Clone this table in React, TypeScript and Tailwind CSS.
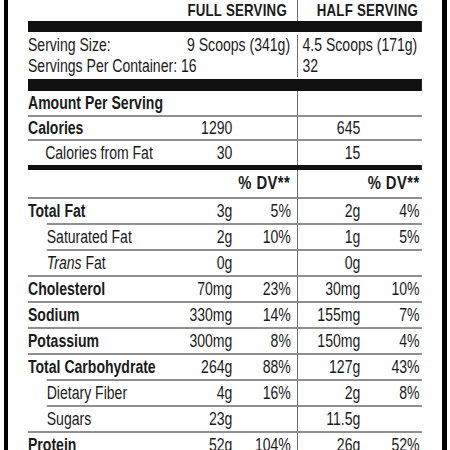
import React from "react"

type Row = {
    label: React.ReactNode
    bold?: boolean
    sub?: boolean
    full: string
    fullDv?: string
    half: string
    halfDv?: string
}

const rows: Row[] = [
    { label: "Total Fat", bold: true, full: "3g", fullDv: "5%", half: "2g", halfDv: "4%" },
    { label: "Saturated Fat", sub: true, full: "2g", fullDv: "10%", half: "1g", halfDv: "5%" },
    { label: <span><i>Trans</i> Fat</span>, sub: true, full: "0g", half: "0g" },
    { label: "Cholesterol", bold: true, full: "70mg", fullDv: "23%", half: "30mg", halfDv: "10%" },
    { label: "Sodium", bold: true, full: "330mg", fullDv: "14%", half: "155mg", halfDv: "7%" },
    { label: "Potassium", bold: true, full: "300mg", fullDv: "8%", half: "150mg", halfDv: "4%" },
    { label: "Total Carbohydrate", bold: true, full: "264g", fullDv: "88%", half: "127g", halfDv: "43%" },
    { label: "Dietary Fiber", sub: true, full: "4g", fullDv: "16%", half: "2g", halfDv: "8%" },
    { label: "Sugars", sub: true, full: "23g", half: "11.5g" },
    { label: "Protein", bold: true, full: "52g", fullDv: "104%", half: "26g", halfDv: "52%" },
]

// widths below are before the horizontal squeeze (scale-x 0.78), which stands in for a condensed face
function ValueCells({ full, fullDv, half, halfDv }: { full?: string; fullDv?: string; half?: string; halfDv?: string }) {
    return (
        <>
            <div className="w-[77px] flex items-center justify-end pr-[6px]">{full}</div>
            <div className="w-[77px] flex items-center justify-end pr-[8px]">{fullDv}</div>
            <div className="w-[87px] flex items-center justify-end pr-[6px] border-l border-[#444]">{half}</div>
            <div className="w-[73px] flex items-center justify-end pr-[3px]">{halfDv}</div>
        </>
    )
}

export default function App() {
    return (
        <div className="w-[450px] h-[450px] overflow-hidden bg-white pl-[4px] font-['Liberation_Sans',Arial,sans-serif] text-[#1a1a1a]">
            <div className="w-[443px] h-[450px] border-l-[4px] border-r-[5px] border-black px-[20px]">
                <div className="w-[505px] origin-left scale-x-[0.78] whitespace-nowrap">
                    {/* column headings */}
                    <div className="flex h-[21px] text-[17px] font-bold leading-[21px] tracking-[0.3px]">
                        <div className="flex-1"></div>
                        <div className="w-[154px] text-right pr-[13px]">FULL SERVING</div>
                        <div className="w-[160px] text-right pr-[5px] border-l border-[#444]">HALF SERVING</div>
                    </div>
                    <div className="h-[11px] bg-[#111]"></div>

                    {/* serving size */}
                    <div className="flex text-[18px] leading-[21px] pt-[3px] pb-[2px]">
                        <div className="w-[345px]">
                            <div className="flex justify-between pr-[9px]">
                                <span>Serving Size:</span>
                                <span>9 Scoops (341g)</span>
                            </div>
                            <div>Servings Per Container: 16</div>
                        </div>
                        <div className="flex-1 border-l border-[#444] pl-[6px]">
                            <div>4.5 Scoops (171g)</div>
                            <div>32</div>
                        </div>
                    </div>
                    <div className="h-[12px] bg-[#111]"></div>

                    {/* calories */}
                    <div className="flex h-[24px] text-[18px]">
                        <div className="flex-1 flex items-center font-bold">Amount Per Serving</div>
                        <div className="w-[160px] border-l border-[#444]"></div>
                    </div>
                    <div className="flex h-[24px] text-[18px] border-t-2 border-[#8f8f8f]">
                        <div className="flex-1 flex items-center font-bold">Calories</div>
                        <ValueCells full="1290" half="645" />
                    </div>
                    <div className="flex h-[26px] text-[18px] border-t-2 border-[#8f8f8f]">
                        <div className="flex-1 flex items-center pl-[22px]">Calories from Fat</div>
                        <ValueCells full="30" half="15" />
                    </div>
                    <div className="h-[5px] bg-[#111]"></div>

                    {/* % daily value */}
                    <div className="flex h-[27px] text-[19px] font-bold tracking-[0.5px]">
                        <div className="flex-1"></div>
                        <div className="w-[154px] flex items-center justify-end pr-[9px]">% DV**</div>
                        <div className="w-[160px] flex items-center justify-end pr-[3px] border-l border-[#444]">% DV**</div>
                    </div>

                    {rows.map((r, i) => (
                        <div
                            key={i}
                            className={`flex h-[26px] text-[18px] border-t-2 border-[#8f8f8f] ${r.sub ? "ml-[24px]" : ""}`}
                        >
                            <div className={`flex-1 flex items-center ${r.bold ? "font-bold" : ""}`}>{r.label}</div>
                            <ValueCells full={r.full} fullDv={r.fullDv} half={r.half} halfDv={r.halfDv} />
                        </div>
                    ))}
                </div>
            </div>
        </div>
    )
}
